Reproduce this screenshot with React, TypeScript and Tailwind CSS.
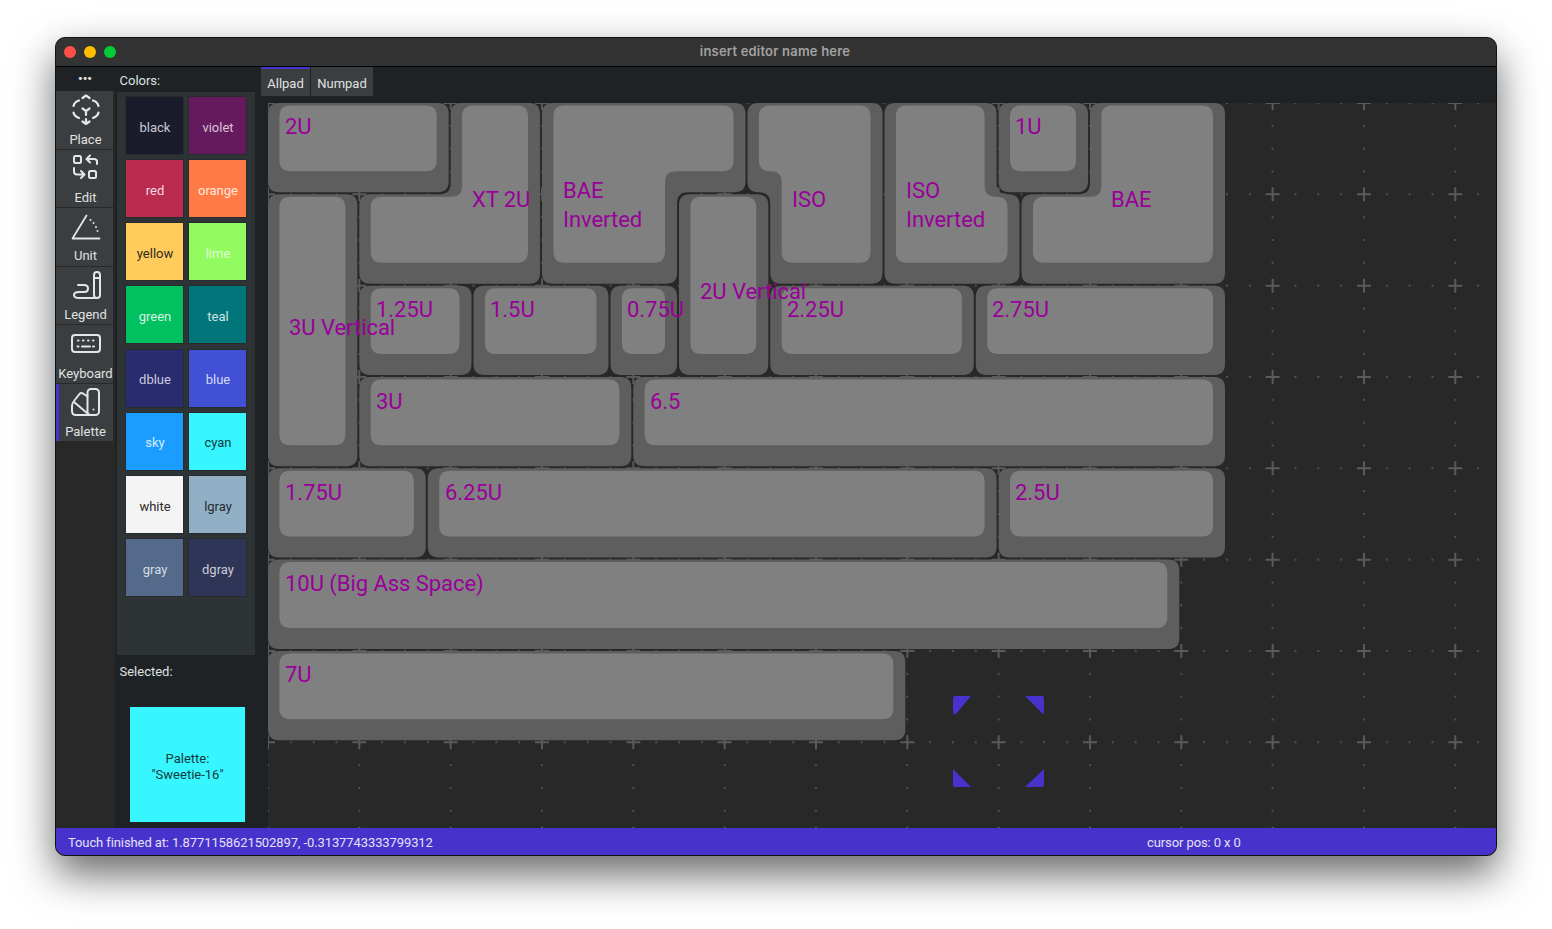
import React from "react";

const U = 91.33;
type P = [number, number];

const rect = (x: number, y: number, w: number, h: number): P[] => [[x, y], [x + w, y], [x + w, y + h], [x, y + h]];

const KEYS: P[][] = [
  rect(0, 0, 2, 1),
  [[2, 0], [3, 0], [3, 2], [1, 2], [1, 1], [2, 1]],
  [[3, 0], [5.25, 0], [5.25, 1], [4.5, 1], [4.5, 2], [3, 2]],
  [[5.25, 0], [6.75, 0], [6.75, 2], [5.5, 2], [5.5, 1], [5.25, 1]],
  [[6.75, 0], [8, 0], [8, 1], [8.25, 1], [8.25, 2], [6.75, 2]],
  rect(8, 0, 1, 1),
  [[9, 0], [10.5, 0], [10.5, 2], [8.25, 2], [8.25, 1], [9, 1]],
  rect(0, 1, 1, 3),
  rect(1, 2, 1.25, 1),
  rect(2.25, 2, 1.5, 1),
  rect(3.75, 2, 0.75, 1),
  rect(4.5, 1, 1, 2),
  rect(5.5, 2, 2.25, 1),
  rect(7.75, 2, 2.75, 1),
  rect(1, 3, 3, 1),
  rect(4, 3, 6.5, 1),
  rect(0, 4, 1.75, 1),
  rect(1.75, 4, 6.25, 1),
  rect(8, 4, 2.5, 1),
  rect(0, 5, 10, 1),
  rect(0, 6, 7, 1),
];

// left/top/right/bottom edge offsets of a key outline
function inset(poly: P[], l: number, t: number, r: number, b: number): P[] {
  const n = poly.length;
  return poly.map((p, i) => {
    const prev = poly[(i - 1 + n) % n];
    const next = poly[(i + 1) % n];
    let dx = 0;
    let dy = 0;
    for (const [a, c] of [[prev, p], [p, next]] as [P, P][]) {
      if (a[1] === c[1]) dy = c[0] > a[0] ? t : -b;
      else dx = c[1] > a[1] ? -r : l;
    }
    return [p[0] * U + dx, p[1] * U + dy] as P;
  });
}

function rounded(pts: P[], rad: number) {
  const n = pts.length;
  let d = "";
  pts.forEach((p, i) => {
    const a = pts[(i - 1 + n) % n];
    const c = pts[(i + 1) % n];
    const la = Math.hypot(a[0] - p[0], a[1] - p[1]);
    const lc = Math.hypot(c[0] - p[0], c[1] - p[1]);
    const ra = Math.min(rad, la / 2);
    const rc = Math.min(rad, lc / 2);
    const s: P = [p[0] + ((a[0] - p[0]) / la) * ra, p[1] + ((a[1] - p[1]) / la) * ra];
    const e: P = [p[0] + ((c[0] - p[0]) / lc) * rc, p[1] + ((c[1] - p[1]) / lc) * rc];
    d += `${i === 0 ? "M" : "L"}${s[0].toFixed(1)} ${s[1].toFixed(1)}Q${p[0].toFixed(1)} ${p[1].toFixed(1)} ${e[0].toFixed(1)} ${e[1].toFixed(1)}`;
  });
  return d + "Z";
}

function Grid() {
  const els: React.ReactNode[] = [];
  for (let i = 0; i < 14; i++) {
    for (let j = 0; j < 9; j++) {
      const x = i * U;
      const y = j * U;
      els.push(<path key={`c${i}-${j}`} d={`M${x - 7} ${y}H${x + 7}M${x} ${y - 7}V${y + 7}`} stroke="#5a5a5a" strokeWidth="2" fill="none" />);
      for (let k = 1; k < 4; k++) {
        els.push(<rect key={`h${i}-${j}-${k}`} x={x + (k * U) / 4 - 1} y={y - 1} width="2" height="2" fill="#505050" />);
        els.push(<rect key={`v${i}-${j}-${k}`} x={x - 1} y={y + (k * U) / 4 - 1} width="2" height="2" fill="#505050" />);
      }
    }
  }
  return <g>{els}</g>;
}

const LABELS: { t: string; x: number; y: number }[] = [
  { t: "2U", x: 285, y: 127 },
  { t: "XT 2U", x: 472, y: 200 },
  { t: "BAE", x: 563, y: 191 },
  { t: "Inverted", x: 563, y: 220 },
  { t: "ISO", x: 792, y: 200 },
  { t: "ISO", x: 906, y: 191 },
  { t: "Inverted", x: 906, y: 220 },
  { t: "1U", x: 1015, y: 127 },
  { t: "BAE", x: 1111, y: 200 },
  { t: "3U Vertical", x: 289, y: 328 },
  { t: "1.25U", x: 376, y: 310 },
  { t: "1.5U", x: 490, y: 310 },
  { t: "0.75U", x: 627, y: 310 },
  { t: "2U Vertical", x: 700, y: 292 },
  { t: "2.25U", x: 787, y: 310 },
  { t: "2.75U", x: 992, y: 310 },
  { t: "3U", x: 376, y: 402 },
  { t: "6.5", x: 650, y: 402 },
  { t: "1.75U", x: 285, y: 493 },
  { t: "6.25U", x: 445, y: 493 },
  { t: "2.5U", x: 1015, y: 493 },
  { t: "10U (Big Ass Space)", x: 285, y: 584 },
  { t: "7U", x: 285, y: 675 },
];

const SWATCHES: [string, string, string][] = [
  ["black", "bg-[#1a1c2c]", "text-[#c9cad0]"],
  ["violet", "bg-[#661a5e]", "text-[#d8c4d6]"],
  ["red", "bg-[#bb2a4f]", "text-[#f3dbe1]"],
  ["orange", "bg-[#ff7a47]", "text-[#ffe6dc]"],
  ["yellow", "bg-[#ffcc5c]", "text-[#2e2b22]"],
  ["lime", "bg-[#91fb5f]", "text-[#e4fdd8]"],
  ["green", "bg-[#00c05f]", "text-[#d6f5e5]"],
  ["teal", "bg-[#00757a]", "text-[#cfe4e5]"],
  ["dblue", "bg-[#292c6f]", "text-[#c9cade]"],
  ["blue", "bg-[#4150d4]", "text-[#d6daf6]"],
  ["sky", "bg-[#1b9dff]", "text-[#d6ecff]"],
  ["cyan", "bg-[#38f6ff]", "text-[#123b40]"],
  ["white", "bg-[#f4f4f4]", "text-[#2b2b2b]"],
  ["lgray", "bg-[#92b0c5]", "text-[#232a30]"],
  ["gray", "bg-[#546a8b]", "text-[#d5dbe3]"],
  ["dgray", "bg-[#2f3557]", "text-[#c9cbd5]"],
];

const ico = { fill: "none", stroke: "#e4e6e6", strokeWidth: 2, strokeLinecap: "round", strokeLinejoin: "round" } as const;

const PlaceIcon = () => (
  <svg width="30" height="33" viewBox="0 0 30 33" {...ico} strokeWidth="2.2">
    <path d="M11.500 5 15 2.500 18.500 5" />
    <path d="M8 7.500C5 8.500 3 10.500 2.500 13" />
    <path d="M22 7.500c3 1 5 3 5.500 5.500" />
    <path d="M2.500 19.500C3 22 5 24 8 25" />
    <path d="M27.500 19.500C27 22 25 24 22 25" />
    <path d="M11.500 15.500 15 18l3.500-2.500M15 18v4" />
    <path d="M15 26v5M11.500 28.500 15 31l3.500-2.500" />
  </svg>
);
const EditIcon = () => (
  <svg width="28" height="26" viewBox="0 0 28 26" {...ico}>
    <rect x="2" y="2" width="7" height="7" rx="1.500" />
    <rect x="17" y="17" width="7" height="7" rx="1.500" />
    <path d="M25 10V7.500C25 5.500 24 5 22 5h-7M18 1.500 14.500 5 18 8.500" />
    <path d="M2 14v3.500C2 19.500 3 20.500 5 20.500h7M9 17l3.500 3.500L9 24" />
  </svg>
);
const UnitIcon = () => (
  <svg width="30" height="26" viewBox="0 0 30 26" {...ico}>
    <path d="M15.500 1.500 1.500 24.500H28.500" strokeWidth="1.800" />
    <g fill="#e4e6e6" stroke="none">
      <circle cx="19.500" cy="6" r="1" />
      <circle cx="22.500" cy="9" r="1" />
      <circle cx="25" cy="13" r="1" />
      <circle cx="26.500" cy="17" r="1" />
    </g>
  </svg>
);
const LegendIcon = () => (
  <svg width="30" height="30" viewBox="0 0 30 30" {...ico}>
    <rect x="23" y="2" width="6" height="26" rx="3" />
    <path d="M23 8h6" />
    <path d="M7 15h6q4 0 4 3.500T13 22H8q-5 0-5 3t5 3h17" />
  </svg>
);
const KeyboardIcon = () => (
  <svg width="30" height="20" viewBox="0 0 30 20" {...ico}>
    <rect x="1" y="1" width="28" height="17" rx="3" />
    <path d="M7 6.500h.5M12 6.500h.5M17 6.500h.5M22 6.500h.5M6.500 12.500h1M11 12.500h8M22 12.500h1" />
  </svg>
);
const PaletteIcon = () => (
  <svg width="30" height="29" viewBox="0 0 30 29" {...ico}>
    <rect x="16.500" y="1" width="11.500" height="26" rx="3.500" />
    <path d="M16.500 8.500 12 5.500Q10 4.500 8.500 6L3 13Q1 15.500 1 18v5q0 4 4 4h19" />
    <path d="M3 14 16 25" />
    <circle cx="22.500" cy="21.500" r="1" fill="#e4e6e6" stroke="none" />
  </svg>
);

const TOOLS: [string, React.ReactNode, string][] = [
  ["Place", <PlaceIcon />, "h-[58px] pt-[2px] pb-[1px]"],
  ["Edit", <EditIcon />, "h-[57px] pt-[4px] pb-[1px]"],
  ["Unit", <UnitIcon />, "h-[58px] pt-[6px] pb-[2px]"],
  ["Legend", <LegendIcon />, "h-[57px] pt-[3px] pb-[1px]"],
  ["Keyboard", <KeyboardIcon />, "h-[58px] pt-[9px] pb-[1px]"],
];

function ToolButton({ name, icon, cls, active }: { name: string; icon: React.ReactNode; cls: string; active?: boolean }) {
  return (
    <div className={`relative flex w-[57px] flex-col items-center justify-between bg-[#3a3e40] pl-[2px] text-[13px] leading-[16px] text-[#e0e2e2] ${cls}`}>
      {active && <div className="absolute bottom-0 left-0 top-0 w-[3px] bg-[#4733cc]" />}
      <div className="flex h-0 flex-1 items-start justify-center">{icon}</div>
      <span>{name}</span>
    </div>
  );
}

export default function App() {
  return (
    <div className="h-[929px] w-[1552px] overflow-hidden bg-white pl-[55px] pt-[37px] font-['Roboto',sans-serif]">
      <div className="flex h-[819px] w-[1442px] flex-col overflow-hidden rounded-[10px] border border-[#111] bg-[#282828] shadow-[0_18px_42px_rgba(0,0,0,0.6)]">
        <div className="relative flex h-[29px] items-center justify-center border-b border-black bg-[#333333] pr-[2px] font-['Inter',sans-serif] text-[13px] font-semibold tracking-[0.2px] text-[#a2a2a2]">
          <div className="absolute left-[8px] top-[8px] flex gap-[8px]">
            <div className="h-[12px] w-[12px] rounded-full bg-[#ff4f4b]" />
            <div className="h-[12px] w-[12px] rounded-full bg-[#ffbd00]" />
            <div className="h-[12px] w-[12px] rounded-full bg-[#00cc33]" />
          </div>
          insert editor name here
        </div>

        <div className="flex min-h-0 flex-1">
          <div className="flex w-[59px] flex-col bg-[#282828]">
            <div className="flex h-[24px] items-start justify-center bg-[#1e2224] pr-[1px] text-[13px] font-bold leading-[24px] text-[#e0e2e2]">•••</div>
            <div className="flex flex-col gap-[1px]">
              {TOOLS.map(([n, i, c]) => (
                <ToolButton key={n} name={n} icon={i} cls={c} />
              ))}
              <ToolButton name="Palette" icon={<PaletteIcon />} cls="h-[57px] pt-[4px] pb-[1px]" active />
            </div>
          </div>

          <div className="flex w-[146px] flex-col bg-[#1e2224] pl-[2px] text-[13px] text-[#dfe1e1]">
            <div className="flex h-[25px] items-center pl-[2.5px] pt-[3px]">Colors:</div>
            <div className="h-[563px] w-[138px] bg-[#2e3335] pl-[9px] pt-[5px]">
              <div className="grid grid-cols-[57px_57px] gap-x-[6px] gap-y-[6.15px]">
                {SWATCHES.map(([n, bg, fg]) => (
                  <div key={n} className={`flex h-[57px] items-center justify-center pl-[1px] pt-[4px] outline outline-1 outline-black/15 ${bg} ${fg}`}>
                    {n}
                  </div>
                ))}
              </div>
            </div>
            <div className="pl-[2.5px] pt-[7px]">Selected:</div>
            <div className="ml-[13px] mt-[25px] flex h-[115px] w-[115px] flex-col items-center justify-center bg-[#38f6ff] pt-[5px] leading-[16px] text-[#123b40]">
              <span>Palette:</span>
              <span>"Sweetie-16"</span>
            </div>
          </div>

          <div className="flex min-w-0 flex-1 flex-col bg-[#1e2224]">
            <div className="flex h-[29px] text-[13px] text-[#e0e2e2]">
              <div className="flex w-[49px] items-center justify-center border-t-2 border-[#4733cc] bg-[#3a3e40] pt-[2px]">Allpad</div>
              <div className="ml-[1px] flex w-[62px] items-center justify-center bg-[#3a3e40] pt-[4px]">Numpad</div>
            </div>
            <div className="flex-1 pl-[7px] pt-[7px]">
              <div className="relative h-full w-full overflow-hidden bg-[#282828]">
                <svg className="absolute left-0 top-0" width="1230" height="730">
                  <Grid />
                  {KEYS.map((k, i) => (
                    <g key={i}>
                      <path d={rounded(inset(k, 0, 0, 2, 2), 11)} fill="#5e5e5e" />
                      <path d={rounded(inset(k, 11.4, 2.5, 14, 23), 11)} fill="#808080" />
                    </g>
                  ))}
                  <g fill="#4733cc">
                    <path d="M687 593H703L688 611H687a2 2 0 0 1-2-2V595a2 2 0 0 1 2-2z" />
                    <path d="M757 593H774a2 2 0 0 1 2 2V611H775z" />
                    <path d="M685 666 703 684H687a2 2 0 0 1-2-2z" />
                    <path d="M776 666V682a2 2 0 0 1-2 2H757z" />
                  </g>
                </svg>
                {LABELS.map((l, i) => (
                  <div
                    key={i}
                    className="absolute whitespace-nowrap text-[22px] leading-[26px] tracking-[-0.05px] text-[#990099]"
                    style={{ left: l.x - 268, top: l.y - 103 - 13 }}
                  >
                    {l.t}
                  </div>
                ))}
              </div>
            </div>
          </div>
        </div>

        <div className="flex h-[27px] items-center bg-[#4733cc] pl-[12px] pt-[2px] text-[13px] tracking-[-0.1px] text-[#e4e1f7]">
          <span className="w-[1079px]">Touch finished at: 1.8771158621502897, -0.3137743333799312</span>
          <span>cursor pos: 0 x 0</span>
        </div>
      </div>
    </div>
  );
}
